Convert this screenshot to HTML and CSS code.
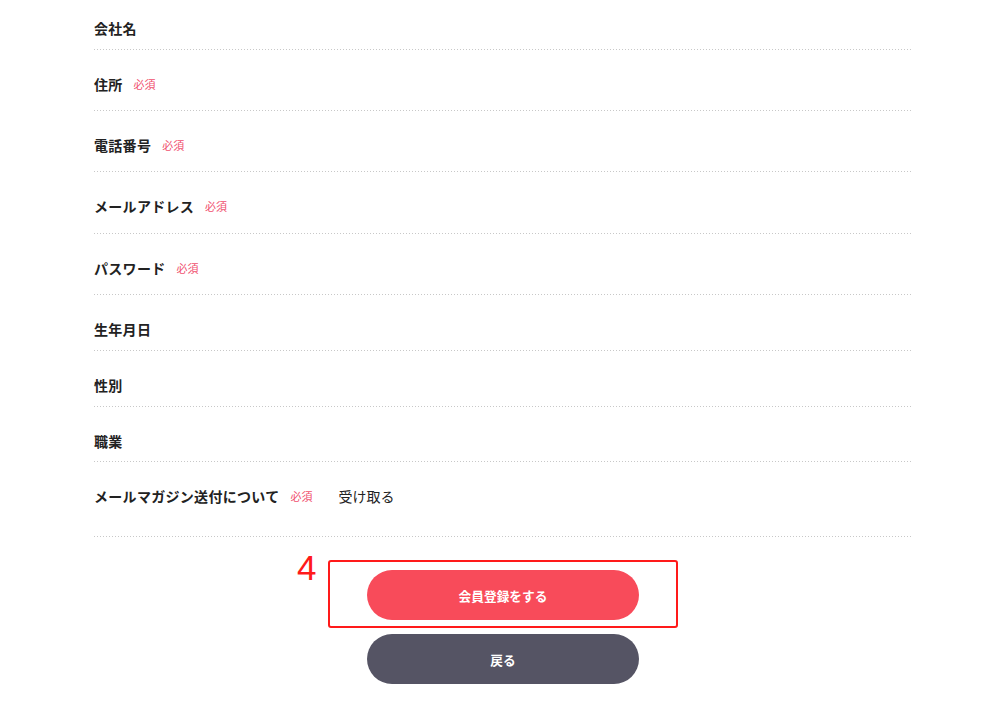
FILE: index.html
```html
<!DOCTYPE html>
<html lang="ja">
<head>
  <meta charset="UTF-8" />
  <title>会員登録</title>
  <link rel="stylesheet" href="styles.css">
</head>
<body>

  <form class="entry">
    <div class="row row-first"><span class="label">会社名</span></div>
    <div class="row req"><span class="label">住所</span><span class="must">必須</span></div>
    <div class="row req"><span class="label">電話番号</span><span class="must">必須</span></div>
    <div class="row req row-mail"><span class="label">メールアドレス</span><span class="must">必須</span></div>
    <div class="row req"><span class="label">パスワード</span><span class="must">必須</span></div>
    <div class="row"><span class="label">生年月日</span></div>
    <div class="row"><span class="label">性別</span></div>
    <div class="row row-job"><span class="label">職業</span></div>
    <div class="row row-last"><span class="label">メールマガジン送付について</span><span class="must">必須</span><span class="value">受け取る</span></div>
  </form>

  <div class="actions">
    <div class="mark">
      <span class="num">4</span>
      <button type="button" class="btn btn-submit">会員登録をする</button>
    </div>
    <button type="button" class="btn btn-back">戻る</button>
  </div>

</body>
</html>
```

FILE: styles.css
```css
body {
  margin: 0;
  font-family: "Noto Sans CJK JP", "Noto Sans", sans-serif;
  color: #222;
  background: #fff;
}
.entry,
.actions {
  width: 818px;
  margin-left: 94px;
}
.row {
  display: flex;
  align-items: center;
  height: 16px;
  padding: 26px 0 14px;
  background: linear-gradient(to right, #c8c8c8 1px, transparent 1px) repeat-x left bottom / 3px 1px;
}
.row-first {
  padding-top: 20px;
}
.req {
  padding-bottom: 19px;
}
.row-mail {
  padding-bottom: 20px;
}
.row-job {
  padding-bottom: 13px;
}
.row-last {
  padding-bottom: 33px;
}
.label {
  font-size: 14px;
  font-weight: bold;
  letter-spacing: 0.3px;
  line-height: 16px;
}
.must {
  margin-left: 11px;
  margin-top: -1px;
  font-size: 11px;
  color: #f0506e;
  line-height: 16px;
}
.value {
  margin-left: 26px;
  font-size: 14px;
  line-height: 16px;
}
.actions {
  display: flex;
  flex-direction: column;
  align-items: center;
  margin-top: 23px;
}
.mark {
  position: relative;
  display: flex;
  justify-content: center;
  width: 346px;
  padding: 8px 0 6px;
  border: 2px solid #ff1a1a;
  border-radius: 3px;
}
.num {
  position: absolute;
  left: -33px;
  top: -12px;
  font-family: "Liberation Sans", sans-serif;
  font-size: 35px;
  line-height: 1;
  color: #ff1a1a;
}
.btn {
  width: 272px;
  height: 50px;
  border: none;
  border-radius: 25px;
  color: #fff;
  font-family: "Noto Sans CJK JP", sans-serif;
  font-size: 12.7px;
  font-weight: bold;
}
.btn-submit {
  background: #f84b5a;
}
.btn-back {
  margin-top: 6px;
  background: #555464;
}
```
